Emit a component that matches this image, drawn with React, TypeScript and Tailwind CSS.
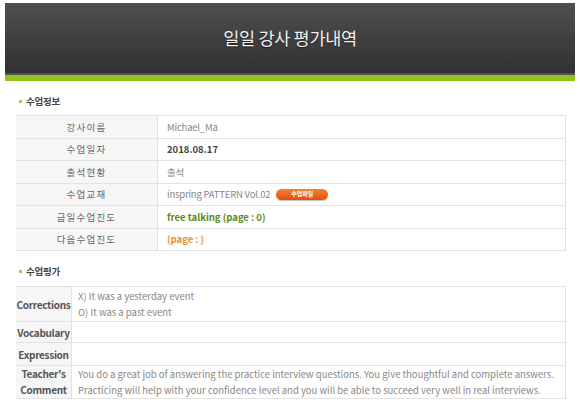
import React from 'react';

const infoRows = [
  { label: '강사이름', value: 'Michael_Ma', tone: 'plain' },
  { label: '수업일자', value: '2018.08.17', tone: 'bold' },
  { label: '출석현황', value: '출석', tone: 'plain' },
  { label: '수업교재', value: 'inspring PATTERN Vol.02', tone: 'file' },
  { label: '금일수업진도', value: 'free talking (page : 0)', tone: 'green' },
  { label: '다음수업진도', value: '(page : )', tone: 'orange' },
];

const SectionTitle: React.FC<{ title: string }> = ({ title }) => (
  <div className="flex items-center gap-[4px] pl-[19px] h-[14px]">
    <span className="w-[3px] h-[3px] bg-[#a5cc3a]"></span>
    <span className="text-[9.5px] font-bold text-[#444] tracking-[-0.2px]">{title}</span>
  </div>
);

const App: React.FC = () => {
  return (
    <div className="w-[580px] h-[405px] bg-white overflow-hidden font-['Noto_Sans_CJK_KR',sans-serif]">
      {/* header */}
      <div className="mx-[5px] mt-[3px]">
        <div className="h-[70px] bg-gradient-to-b from-[#4f4f4f] to-[#313131] flex items-center justify-center">
          <h1 className="text-[17.5px] text-[#f2f2f2] tracking-[-0.3px] [text-shadow:0_1px_1px_rgba(0,0,0,0.5)]">
            일일 강사 평가내역
          </h1>
        </div>
        <div className="h-[2px] bg-[#555]"></div>
        <div className="h-[6px] bg-[#8fc21c]"></div>
      </div>

      <div className="mt-[13px]">
        <SectionTitle title="수업정보" />
      </div>

      {/* lesson info */}
      <div className="mt-[7px] ml-[16px] w-[550px] border-t border-r border-[#e2e2e2]">
        {infoRows.map((row) => (
          <div key={row.label} className="flex h-[22.5px] border-b border-[#e2e2e2]">
            <div className="w-[141px] shrink-0 bg-[#f6f6f6] flex items-center justify-center text-[9.5px] text-[#666] tracking-[1.2px]">
              {row.label}
            </div>
            <div className="flex-1 flex items-center pl-[9px] border-l border-[#e2e2e2] text-[9.5px] whitespace-nowrap">
              {row.tone === 'plain' && <span className="text-[#888] tracking-[-0.2px]">{row.value}</span>}
              {row.tone === 'bold' && <span className="text-[#444] font-bold">{row.value}</span>}
              {row.tone === 'green' && <span className="text-[#5a8a1c] font-bold">{row.value}</span>}
              {row.tone === 'orange' && <span className="text-[#e59038] font-bold">{row.value}</span>}
              {row.tone === 'file' && (
                <>
                  <span className="text-[#888] tracking-[-0.2px]">{row.value}</span>
                  <span className="ml-[6px] w-[52px] h-[11px] rounded-full bg-gradient-to-b from-[#f6822f] to-[#de4e0b] shadow-[0_1px_1px_rgba(0,0,0,0.25)] flex items-center justify-center text-[6px] font-bold text-white leading-none">
                    수업파일
                  </span>
                </>
              )}
            </div>
          </div>
        ))}
      </div>

      <div className="mt-[13px]">
        <SectionTitle title="수업평가" />
      </div>

      {/* evaluation */}
      <div className="mt-[8px] ml-[16px] w-[550px] border-t border-r border-[#e2e2e2] text-[9.5px] whitespace-nowrap">
        <div className="flex h-[35px] border-b border-[#e2e2e2]">
          <div className="w-[55px] shrink-0 bg-[#f6f6f6] flex items-center justify-center font-bold text-[#555] text-[10px] tracking-[-0.3px]">Corrections</div>
          <div className="flex-1 border-l border-[#e2e2e2] pl-[6px] flex flex-col justify-center text-[#888] leading-[16px]">
            <span>X) It was a yesterday event</span>
            <span>O) It was a past event</span>
          </div>
        </div>
        <div className="flex h-[21px] border-b border-[#e2e2e2]">
          <div className="w-[55px] shrink-0 bg-[#f6f6f6] flex items-center justify-center font-bold text-[#555] text-[10px] tracking-[-0.3px]">Vocabulary</div>
          <div className="flex-1 border-l border-[#e2e2e2]"></div>
        </div>
        <div className="flex h-[23px] border-b border-[#e2e2e2]">
          <div className="w-[55px] shrink-0 bg-[#f6f6f6] flex items-center justify-center font-bold text-[#555] text-[10px] tracking-[-0.3px]">Expression</div>
          <div className="flex-1 border-l border-[#e2e2e2]"></div>
        </div>
        <div className="flex h-[33px] border-b border-[#e2e2e2]">
          <div className="w-[55px] shrink-0 bg-[#f6f6f6] flex flex-col items-center justify-center font-bold text-[#555] text-[10px] tracking-[-0.3px] leading-[16px]">
            <span>Teacher's</span>
            <span>Comment</span>
          </div>
          <div className="flex-1 border-l border-[#e2e2e2] pl-[6px] flex flex-col justify-center text-[#888] leading-[16px]">
            <span>You do a great job of answering the practice interview questions. You give thoughtful and complete answers.</span>
            <span>Practicing will help with your confidence level and you will be able to succeed very well in real interviews.</span>
          </div>
        </div>
      </div>
    </div>
  );
};

export default App;
